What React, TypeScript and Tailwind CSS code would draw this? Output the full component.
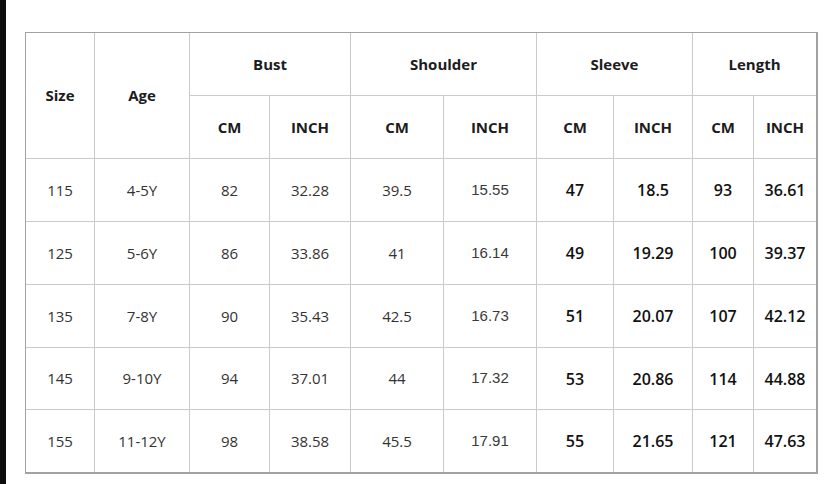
import React from "react";

type Row = {
  size: string;
  age: string;
  bust: [string, string];
  shoulder: [string, string];
  sleeve: [string, string];
  length: [string, string];
};

const rows: Row[] = [
  { size: "115", age: "4-5Y", bust: ["82", "32.28"], shoulder: ["39.5", "15.55"], sleeve: ["47", "18.5"], length: ["93", "36.61"] },
  { size: "125", age: "5-6Y", bust: ["86", "33.86"], shoulder: ["41", "16.14"], sleeve: ["49", "19.29"], length: ["100", "39.37"] },
  { size: "135", age: "7-8Y", bust: ["90", "35.43"], shoulder: ["42.5", "16.73"], sleeve: ["51", "20.07"], length: ["107", "42.12"] },
  { size: "145", age: "9-10Y", bust: ["94", "37.01"], shoulder: ["44", "17.32"], sleeve: ["53", "20.86"], length: ["114", "44.88"] },
  { size: "155", age: "11-12Y", bust: ["98", "38.58"], shoulder: ["45.5", "17.91"], sleeve: ["55", "21.65"], length: ["121", "47.63"] },
];

const cell = "bg-white flex items-center justify-center";
const head = `${cell} font-['Open_Sans',sans-serif] font-bold text-[15px] text-[#1c1c1c]`;
const plain = `${cell} font-['Open_Sans',sans-serif] text-[15px] text-[#333]`;
const narrow = `${cell} font-['Liberation_Sans',sans-serif] text-[15px] text-[#3a3a3a]`;
const strong = `${cell} font-['Open_Sans',sans-serif] font-semibold text-[16px] text-[#111]`;

export default function App() {
  return (
    <div className="flex w-[830px] h-[484px] bg-white overflow-hidden">
      <div className="w-[6px] shrink-0 bg-[#0d0d0d]" />
      <div className="pl-[19px] pt-[32px]">
        <div className="grid grid-cols-[68px_94px_79px_80px_92px_92px_76px_78px_60px_62px] grid-rows-[62px_62px_62px_62px_62px_61px_62px] gap-px bg-[#cacaca] border-t border-l border-r-2 border-b-2 border-[#a2a2a2]">
          <div className={`${head} row-span-2`}>Size</div>
          <div className={`${head} row-span-2`}>Age</div>
          <div className={`${head} col-span-2`}>Bust</div>
          <div className={`${head} col-span-2`}>Shoulder</div>
          <div className={`${head} col-span-2`}>Sleeve</div>
          <div className={`${head} col-span-2`}>Length</div>
          <div className={head}>CM</div>
          <div className={head}>INCH</div>
          <div className={head}>CM</div>
          <div className={head}>INCH</div>
          <div className={head}>CM</div>
          <div className={head}>INCH</div>
          <div className={head}>CM</div>
          <div className={head}>INCH</div>
          {rows.map((r) => (
            <React.Fragment key={r.size}>
              <div className={plain}>{r.size}</div>
              <div className={plain}>{r.age}</div>
              <div className={plain}>{r.bust[0]}</div>
              <div className={plain}>{r.bust[1]}</div>
              <div className={plain}>{r.shoulder[0]}</div>
              <div className={narrow}>{r.shoulder[1]}</div>
              <div className={strong}>{r.sleeve[0]}</div>
              <div className={strong}>{r.sleeve[1]}</div>
              <div className={strong}>{r.length[0]}</div>
              <div className={strong}>{r.length[1]}</div>
            </React.Fragment>
          ))}
        </div>
      </div>
    </div>
  );
}
